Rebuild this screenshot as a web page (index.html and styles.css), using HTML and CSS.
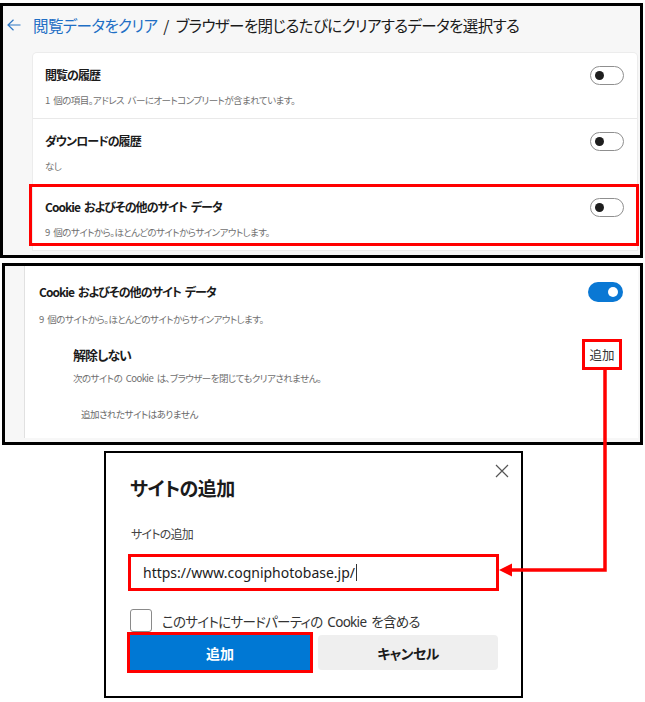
FILE: index.html
```html
<!DOCTYPE html>
<html lang="ja">
<head>
<meta charset="utf-8">
<title>閲覧データをクリア</title>
<link rel="stylesheet" href="styles.css">
</head>
<body>
<div class="stage">
  <section class="panel panel-top">
    <header class="crumb">
      <svg class="back" width="14" height="12" viewBox="0 0 14 12"><path d="M13.5 6H1 M6.5 0.8 L1 6 L6.5 11.2" fill="none" stroke="#2f78c4" stroke-width="1.2"/></svg>
      <span class="crumb-link">閲覧データをクリア</span>
      <span class="crumb-sep">/</span>
      <span class="crumb-title">ブラウザーを閉じるたびにクリアするデータを選択する</span>
    </header>
    <div class="card">
      <div class="row">
        <div class="row-text">
          <div class="row-title">閲覧の履歴</div>
          <div class="row-sub">1 個の項目。アドレス バーにオートコンプリートが含まれています。</div>
        </div>
        <span class="toggle"></span>
      </div>
      <div class="row">
        <div class="row-text">
          <div class="row-title">ダウンロードの履歴</div>
          <div class="row-sub">なし</div>
        </div>
        <span class="toggle"></span>
      </div>
      <div class="row row-last highlight">
        <div class="row-text">
          <div class="row-title">Cookie およびその他のサイト データ</div>
          <div class="row-sub">9 個のサイトから。ほとんどのサイトからサインアウトします。</div>
        </div>
        <span class="toggle"></span>
      </div>
    </div>
  </section>

  <section class="panel panel-cookie">
    <div class="card2">
      <div class="head2">
        <div class="row-title">Cookie およびその他のサイト データ</div>
        <span class="toggle toggle-on"></span>
      </div>
      <div class="row-sub sub2">9 個のサイトから。ほとんどのサイトからサインアウトします。</div>
      <div class="nested">
        <div class="nested-head">
          <div class="nested-title">解除しない</div>
          <span class="add-link">追加</span>
        </div>
        <div class="row-sub nested-sub">次のサイトの Cookie は、ブラウザーを閉じてもクリアされません。</div>
        <div class="empty">追加されたサイトはありません</div>
      </div>
    </div>
  </section>

  <div class="dialog">
    <div class="dlg-head">
      <h2 class="dlg-title">サイトの追加</h2>
      <svg class="dlg-close" width="14" height="14" viewBox="0 0 14 14"><path d="M1 1L13 13M13 1L1 13" stroke="#555" stroke-width="1.2"/></svg>
    </div>
    <div class="dlg-label">サイトの追加</div>
    <div class="dlg-input"><span>https://www.cogniphotobase.jp/</span><span class="caret"></span></div>
    <div class="dlg-check">
      <span class="checkbox"></span>
      <span class="check-label">このサイトにサードパーティの Cookie を含める</span>
    </div>
    <div class="dlg-buttons">
      <span class="btn btn-primary">追加</span>
      <span class="btn btn-secondary">キャンセル</span>
    </div>
  </div>

  <svg class="connector" width="645" height="702" viewBox="0 0 645 702">
    <path d="M605 370 V570 H509" fill="none" stroke="#ff0000" stroke-width="3.5"/>
    <polygon points="499,570 512,563.5 512,576.5" fill="#ff0000"/>
  </svg>
</div>
</body>
</html>
```

FILE: styles.css
```css
* { box-sizing: border-box; margin: 0; padding: 0; }
html, body { background: #fff; }
body {
  font-family: "Segoe UI", "Noto Sans", "Noto Sans CJK JP", sans-serif;
  color: #1b1b1b;
  font-feature-settings: "palt";
}
.stage { position: relative; width: 645px; height: 702px; padding-top: 3px; }

.panel {
  border: 3px solid #000;
  background: #f7f7f7;
  overflow: hidden;
  font-family: "Noto Sans CJK JP", sans-serif;
  word-spacing: 2px;
}
.panel-top { width: 643px; height: 255px; }

.crumb {
  height: 38px;
  display: flex;
  align-items: center;
  padding-left: 4px;
  font-size: 15.5px;
  letter-spacing: -0.6px;
  white-space: nowrap;
}
.back { margin-right: 12px; flex: none; }
.crumb-link { color: #1f6fc5; }
.crumb-sep { margin: 0 7px 0 6px; }

.card {
  margin: 9px 3px 0 30px;
  background: #fff;
  border-radius: 4px 4px 0 0;
  box-shadow: 0 0 0 1px #ececec;
}
.row {
  position: relative;
  height: 66px;
  display: flex;
  justify-content: space-between;
  align-items: flex-start;
  padding: 13px 13px 0 12px;
  border-bottom: 1px solid #e9e9e9;
}
.row-last { height: 65px; border-bottom: 0; }
.highlight::after {
  content: "";
  position: absolute;
  top: -1px; right: -2px; bottom: 4px; left: -4px;
  border: 3px solid #ff0000;
}
.row-title { font-size: 12px; font-weight: 600; line-height: 18px; letter-spacing: -0.95px; }
.row-sub { font-size: 9.5px; line-height: 18px; color: #707070; margin-top: 7px; letter-spacing: -0.55px; }

.toggle {
  flex: none;
  position: relative;
  width: 34px; height: 19px;
  border: 1px solid #8f8f8f;
  border-radius: 10px;
  background: #fff;
}
.toggle::after {
  content: "";
  position: absolute;
  left: 4px; top: 4px;
  width: 9px; height: 9px;
  border-radius: 50%;
  background: #1e1e1e;
}
.toggle-on { width: 35px; height: 20px; border: 0; background: #0a78d4; }
.toggle-on::after { left: auto; right: 5px; top: 5px; width: 10px; height: 10px; background: #fff; }

.panel-cookie { width: 641px; height: 182px; margin: 5px 0 0 2px; }
.card2 {
  height: 172px;
  margin: 0 2px 0 19px;
  background: #fff;
  border-left: 1px solid #e1e1e1;
  padding: 16px 15px 0 14px;
}
.head2 { display: flex; justify-content: space-between; align-items: flex-start; }
.head2 .row-title { line-height: 20px; }
.sub2 { margin-top: 8px; }
.nested { padding-left: 34px; }
.nested-head { margin-top: 11px; height: 31px; display: flex; align-items: center; justify-content: space-between; }
.nested-title { font-size: 13px; font-weight: 600; letter-spacing: -1px; }
.add-link {
  width: 40px; height: 31px;
  margin-right: 1px;
  border: 3px solid #ff0000;
  display: flex; align-items: center; justify-content: center;
  font-size: 12.5px; color: #333;
}
.nested-sub { margin-top: 0; line-height: 16px; }
.empty { margin-top: 19px; padding-left: 8px; font-size: 9.5px; line-height: 18px; color: #6a6a6a; letter-spacing: -0.5px; }

.dialog {
  margin: 6px 0 0 104px;
  width: 419px; height: 247px;
  border: 2px solid #000;
  background: #fff;
  padding: 0 23px 26px 24px;
}
.dlg-head { display: flex; justify-content: space-between; align-items: flex-start; }
.dlg-title { margin-top: 22px; font-size: 19px; line-height: 28px; font-weight: 600; color: #1b1b1b; letter-spacing: -0.5px; }
.dlg-close { margin: 11px -11px 0 0; flex: none; }
.dlg-label { margin-top: 23px; font-size: 12px; line-height: 18px; color: #444; padding-left: 1px; letter-spacing: -0.8px; }
.dlg-input {
  margin: 10px 0 0 -2px;
  width: 371px; height: 37px;
  border: 3px solid #ff0000;
  display: flex; align-items: center;
  padding-left: 12px;
  font-size: 14px; color: #1b1b1b;
}
.caret { display: inline-block; width: 1px; height: 17px; background: #333; margin-left: 1px; }
.dlg-check { margin-top: 18px; display: flex; align-items: center; }
.checkbox { width: 22px; height: 23px; border: 1px solid #8a8a8a; border-radius: 3px; flex: none; }
.check-label { margin-left: 10px; font-size: 13.5px; color: #333; letter-spacing: -0.7px; word-spacing: 2px; }
.dlg-buttons { margin-top: 3px; display: flex; gap: 8px; }
.btn {
  width: 180px; height: 35px;
  display: flex; align-items: center; justify-content: center;
  font-size: 14px; font-weight: 600;
}
.btn-primary { background: #0078d4; color: #fff; outline: 3px solid #ff0000; }
.btn-secondary { background: #efefef; color: #1b1b1b; border-radius: 4px; letter-spacing: -0.6px; }

.connector { position: absolute; left: 0; top: 0; pointer-events: none; }
```
